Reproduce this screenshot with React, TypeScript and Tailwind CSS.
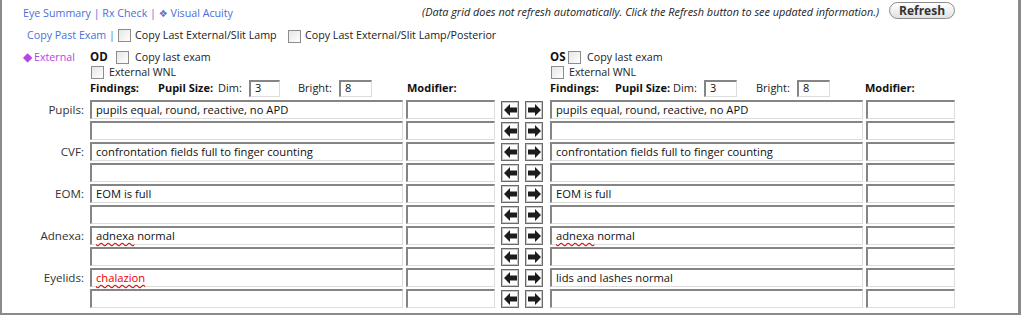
import React from "react";

function Check() {
  return (
    <span className="inline-block w-[13px] h-[13px] shrink-0 border border-[#8c8c8c] bg-linear-to-br from-[#e6e6e6] to-white align-middle" />
  );
}

function Box({
  w,
  text,
  red,
  wavy,
  rest,
}: {
  w: string;
  text?: string;
  red?: boolean;
  wavy?: string;
  rest?: string;
}) {
  return (
    <div
      className={`${w} h-[19px] shrink-0 bg-white border-t-2 border-l-2 border-r border-b border-t-[#858585] border-l-[#858585] border-r-[#dddddd] border-b-[#dddddd] pl-[4px] flex items-center whitespace-nowrap text-[11.2px] ${
        red ? "text-[#e80000]" : "text-[#111]"
      }`}
    >
      {wavy ? (
        <span className="underline decoration-wavy decoration-[#e00000] underline-offset-[2px] leading-[14px]">
          {wavy}
        </span>
      ) : null}
      {rest ? <span className="whitespace-pre">{rest}</span> : null}
      {text}
    </div>
  );
}

function SmallBox({ w, v }: { w: string; v: string }) {
  return (
    <div
      className={`${w} h-[17px] shrink-0 bg-white border-t-2 border-l-2 border-r border-b border-t-[#858585] border-l-[#858585] border-r-[#dddddd] border-b-[#dddddd] pl-[4px] flex items-center text-[11px] text-[#111]`}
    >
      {v}
    </div>
  );
}

function Arrow({ dir }: { dir: "l" | "r" }) {
  return (
    <div className="w-[18px] h-[18px] shrink-0 border border-[#6a6a6a] bg-white flex items-center justify-center">
      <div className="w-[16px] h-[16px] border border-[#c8c8c8] flex items-center justify-center">
        <svg width="13" height="12" viewBox="0 0 13 12">
          {dir === "l" ? (
            <polygon points="0,6 6,0 6,3.5 13,3.5 13,8.5 6,8.5 6,12" fill="#1c1c1c" />
          ) : (
            <polygon points="13,6 7,0 7,3.5 0,3.5 0,8.5 7,8.5 7,12" fill="#1c1c1c" />
          )}
        </svg>
      </div>
    </div>
  );
}

type Cell = { text?: string; wavy?: string; rest?: string; red?: boolean };
type Row = { label: string; od: Cell; os: Cell };

const rows: Row[] = [
  {
    label: "Pupils:",
    od: { text: "pupils equal, round, reactive, no APD" },
    os: { text: "pupils equal, round, reactive, no APD" },
  },
  {
    label: "CVF:",
    od: { text: "confrontation fields full to finger counting" },
    os: { text: "confrontation fields full to finger counting" },
  },
  { label: "EOM:", od: { text: "EOM is full" }, os: { text: "EOM is full" } },
  {
    label: "Adnexa:",
    od: { wavy: "adnexa", rest: " normal" },
    os: { wavy: "adnexa", rest: " normal" },
  },
  {
    label: "Eyelids:",
    od: { wavy: "chalazion", red: true },
    os: { text: "lids and lashes normal" },
  },
];

function Line({ label, od, os }: { label?: string; od: Cell; os: Cell }) {
  return (
    <div className="flex items-center h-[19px] mb-[2px]">
      <div className="w-[88px] shrink-0 pr-[6px] text-right text-[11.6px] text-[#333]">
        {label}
      </div>
      <Box w="w-[313px]" {...od} />
      <div className="ml-[3px]">
        <Box w="w-[89px]" />
      </div>
      <div className="ml-[6px]">
        <Arrow dir="l" />
      </div>
      <div className="ml-[6px]">
        <Arrow dir="r" />
      </div>
      <div className="ml-[7px]">
        <Box w="w-[313px]" {...os} />
      </div>
      <div className="ml-[3px]">
        <Box w="w-[89px]" />
      </div>
    </div>
  );
}

export default function App() {
  return (
    <div className="w-[1021px] h-[315px] bg-white border-l-2 border-r-[3px] border-b-2 border-[#8a8a8a] font-['Open_Sans',sans-serif] text-[10.7px] text-[#222] overflow-hidden">
      {/* line 1 */}
      <div className="flex items-center h-[24px] pl-[21px] pr-[63px]">
        <div className="text-[#4a6fdc] whitespace-nowrap pt-[2px]">
          Eye Summary | Rx Check |{" "}
          <span className="font-['DejaVu_Sans',sans-serif] text-[10px]">❖</span> Visual Acuity
        </div>
        <div className="ml-auto flex items-center">
          <span className="italic text-[10.9px] text-[#222] whitespace-nowrap">
            (Data grid does not refresh automatically. Click the Refresh button to see updated information.)
          </span>
          <button className="ml-[10px] w-[66px] h-[17px] mb-[3px] rounded-full border border-[#8a8a8a] bg-linear-to-b from-white to-[#e2e2e2] text-[12px] font-bold text-[#333] flex items-center justify-center leading-none">
            Refresh
          </button>
        </div>
      </div>
      {/* line 2 */}
      <div className="flex items-center h-[22px] pl-[25px]">
        <span className="w-[91px] text-[#4a6fdc] whitespace-nowrap">Copy Past Exam |</span>
        <span className="flex">
          <Check />
        </span>
        <span className="ml-[4px] w-[153px] whitespace-nowrap">Copy Last External/Slit Lamp</span>
        <span className="flex mt-[3px]">
          <Check />
        </span>
        <span className="ml-[4px] whitespace-nowrap">Copy Last External/Slit Lamp/Posterior</span>
      </div>
      {/* lines 3-4 */}
      <div className="flex mt-[3px]">
        <div className="w-[88px] shrink-0 pl-[21px] h-[16px] flex items-center text-[#b445e6] whitespace-nowrap">
          <span className="text-[12px] mr-[2px] leading-none">◆</span>External
        </div>
        <div className="w-[460px] shrink-0">
          <div className="flex items-center h-[16px]">
            <span className="w-[26px] font-bold text-[11.5px] text-[#111]">OD</span>
            <Check />
            <span className="ml-[6px]">Copy last exam</span>
          </div>
          <div className="flex items-center h-[14px] pl-[1px]">
            <Check />
            <span className="ml-[5px]">External WNL</span>
          </div>
        </div>
        <div>
          <div className="flex items-center h-[16px]">
            <span className="w-[18px] font-bold text-[11.5px] text-[#111]">OS</span>
            <Check />
            <span className="ml-[6px]">Copy last exam</span>
          </div>
          <div className="flex items-center h-[14px] pl-[1px]">
            <Check />
            <span className="ml-[5px]">External WNL</span>
          </div>
        </div>
      </div>
      {/* line 5 */}
      <div className="flex items-center h-[18px] mb-[3px] text-[11px]">
        <div className="w-[88px] shrink-0" />
        <div className="w-[460px] shrink-0 flex items-center whitespace-nowrap">
          <span className="w-[68px] font-bold text-[#111]">Findings:</span>
          <span className="w-[60px] font-bold text-[#111]">Pupil Size:</span>
          <span className="w-[31px]">Dim:</span>
          <SmallBox w="w-[31px]" v="3" />
          <span className="ml-[18px] w-[41px]">Bright:</span>
          <SmallBox w="w-[33px]" v="8" />
          <span className="ml-[35px] font-bold text-[#111]">Modifier:</span>
        </div>
        <div className="flex items-center whitespace-nowrap">
          <span className="w-[65px] font-bold text-[#111]">Findings:</span>
          <span className="w-[58px] font-bold text-[#111]">Pupil Size:</span>
          <span className="w-[31px]">Dim:</span>
          <SmallBox w="w-[33px]" v="3" />
          <span className="ml-[19px] w-[41px]">Bright:</span>
          <SmallBox w="w-[33px]" v="8" />
          <span className="ml-[35px] font-bold text-[#111]">Modifier:</span>
        </div>
      </div>
      {/* rows */}
      {rows.map((r) => (
        <React.Fragment key={r.label}>
          <Line label={r.label} od={r.od} os={r.os} />
          <Line od={{}} os={{}} />
        </React.Fragment>
      ))}
    </div>
  );
}
